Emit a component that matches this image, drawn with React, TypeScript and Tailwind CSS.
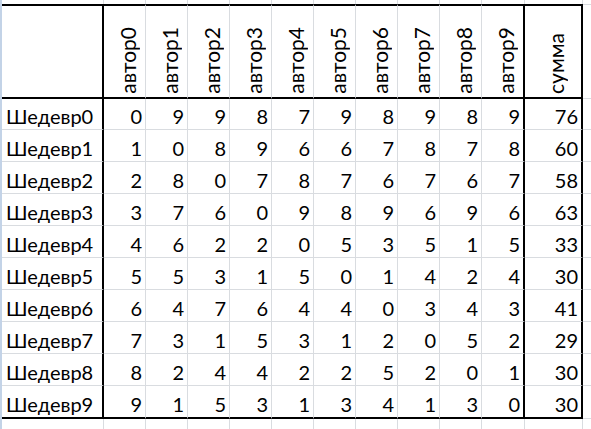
import React from "react";

const data: number[][] = [
  [0, 9, 9, 8, 7, 9, 8, 9, 8, 9],
  [1, 0, 8, 9, 6, 6, 7, 8, 7, 8],
  [2, 8, 0, 7, 8, 7, 6, 7, 6, 7],
  [3, 7, 6, 0, 9, 8, 9, 6, 9, 6],
  [4, 6, 2, 2, 0, 5, 3, 5, 1, 5],
  [5, 5, 3, 1, 5, 0, 1, 4, 2, 4],
  [6, 4, 7, 6, 4, 4, 0, 3, 4, 3],
  [7, 3, 1, 5, 3, 1, 2, 0, 5, 2],
  [8, 2, 4, 4, 2, 2, 5, 2, 0, 1],
  [9, 1, 5, 3, 1, 3, 4, 1, 3, 0],
];

const mids = [0, 1, 2, 3, 4, 5, 6, 7, 8];

function StripRow({ h }: { h: string }) {
  return (
    <div className={`flex ${h}`}>
      <div className="w-[2px] shrink-0 bg-[#c3d3e7]" />
      <div className="w-[102px] shrink-0 border-r border-r-[#d9dce0]" />
      {mids.map((i) => (
        <div key={i} className="w-[42px] shrink-0 border-r border-r-[#d9dce0]" />
      ))}
      <div className="w-[43px] shrink-0 border-r border-r-[#d9dce0]" />
      <div className="w-[58px] shrink-0 border-r border-r-[#d9dce0]" />
      <div className="flex-1" />
    </div>
  );
}

function HeadText({ t }: { t: string }) {
  return (
    <div className="flex h-full items-end justify-center pb-[3px] pl-[6px]">
      <span className="[writing-mode:vertical-rl] rotate-180 leading-[20px] text-[21px]">{t}</span>
    </div>
  );
}

export default function App() {
  return (
    <div className="w-[591px] h-[429px] overflow-hidden bg-white text-black font-[Lato,'Noto_Sans',sans-serif] text-[20px]">
      <StripRow h="h-[4px]" />
      {/* header */}
      <div className="flex h-[95px]">
        <div className="w-[2px] shrink-0 bg-[#c3d3e7]" />
        <div className="w-[102px] shrink-0 border-r-2 border-r-black border-t-2 border-t-black border-b-2 border-b-black" />
        {mids.map((i) => (
          <div
            key={i}
            className="w-[42px] shrink-0 border-r border-r-[#d9dce0] border-t-2 border-t-black border-b-2 border-b-black"
          >
            <HeadText t={`автор${i}`} />
          </div>
        ))}
        <div className="w-[43px] shrink-0 border-r-2 border-r-black border-t-2 border-t-black border-b-2 border-b-black">
          <HeadText t="автор9" />
        </div>
        <div className="w-[58px] shrink-0 border-r-2 border-r-black border-t-2 border-t-black border-b-2 border-b-black">
          <HeadText t="сумма" />
        </div>
        <div className="flex-1 border-t border-t-[#d9dce0] border-b border-b-[#d9dce0]" />
      </div>
      {data.map((row, r) => {
        const last = r === data.length - 1;
        const h = r === 0 ? "h-[31px]" : last ? "h-[33px]" : "h-[32px]";
        const bb = last ? "border-b-2 border-b-black" : "border-b border-b-[#d9dce0]";
        const sum = row.reduce((a, b) => a + b, 0);
        return (
          <div key={r} className={`flex ${h}`}>
            <div className="w-[2px] shrink-0 bg-[#c3d3e7]" />
            <div className={`w-[102px] shrink-0 border-r-2 border-r-black ${bb} flex items-end pl-[4px] pb-[2px] leading-[22px]`}>
              Шедевр{r}
            </div>
            {row.slice(0, 9).map((v, c) => (
              <div
                key={c}
                className={`w-[42px] shrink-0 border-r border-r-[#d9dce0] ${bb} flex items-end justify-end pr-[3px] pb-[2px] leading-[22px]`}
              >
                {v}
              </div>
            ))}
            <div className={`w-[43px] shrink-0 border-r-2 border-r-black ${bb} flex items-end justify-end pr-[3px] pb-[2px] leading-[22px]`}>
              {row[9]}
            </div>
            <div className={`w-[58px] shrink-0 border-r-2 border-r-black ${bb} flex items-end justify-end pr-[3px] pb-[2px] leading-[22px]`}>
              {sum}
            </div>
            <div className="flex-1 border-b border-b-[#d9dce0]" />
          </div>
        );
      })}
      <StripRow h="h-[10px]" />
    </div>
  );
}
